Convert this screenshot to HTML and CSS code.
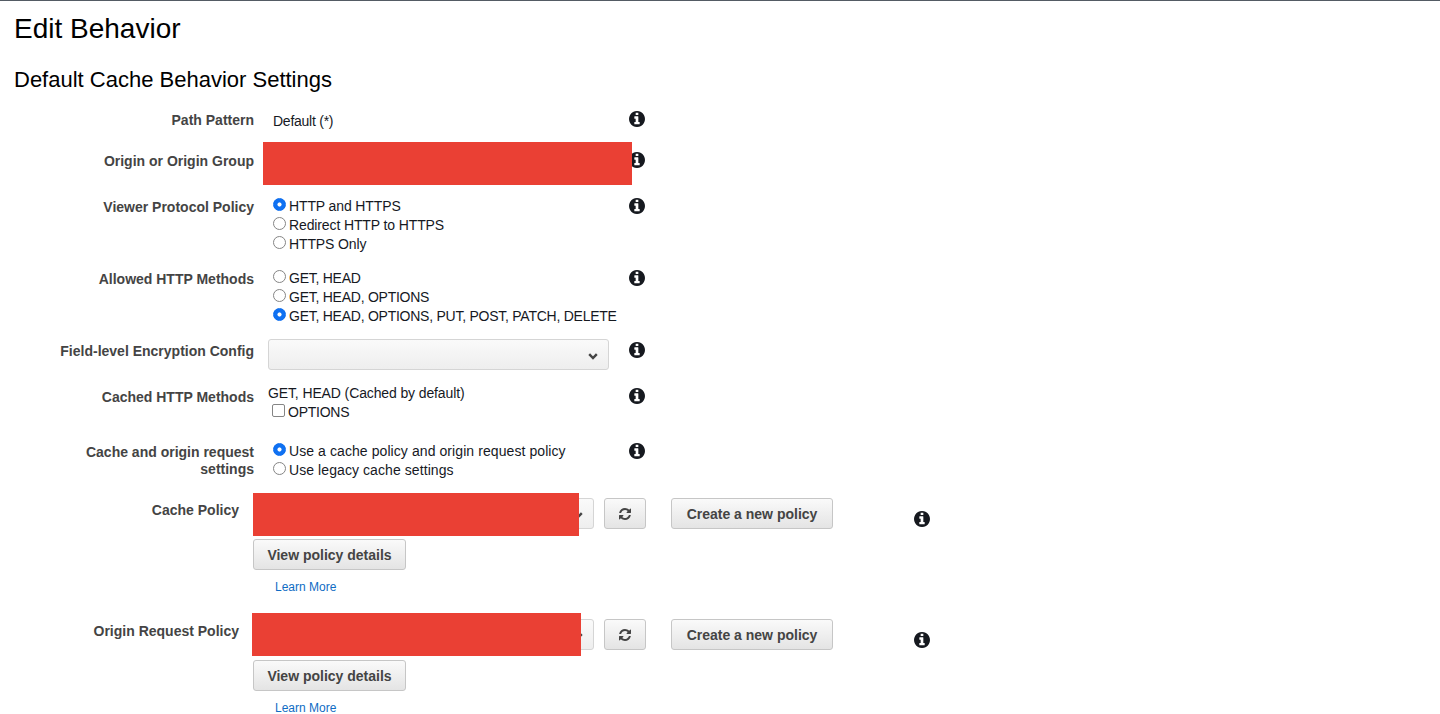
FILE: index.html
```html
<!DOCTYPE html>
<html lang="en">
<head>
  <meta charset="UTF-8">
  <meta name="viewport" content="width=device-width, initial-scale=1.0">
  <title>Edit Behavior</title>
  <link rel="stylesheet" href="styles.css">
</head>
<body>
  <svg class="sprite" aria-hidden="true">
    <symbol id="icon-info" viewBox="0 128 1536 1536">
      <path d="M1024 1376v-160q0-14-9-23t-23-9h-96v-512q0-14-9-23t-23-9h-320q-14 0-23 9t-9 23v160q0 14 9 23t23 9h96v320h-96q-14 0-23 9t-9 23v160q0 14 9 23t23 9h448q14 0 23-9t9-23zm-128-896v-160q0-14-9-23t-23-9h-192q-14 0-23 9t-9 23v160q0 14 9 23t23 9h192q14 0 23-9t9-23zm640 416q0 209-103 385.5t-279.5 279.5-385.5 103-385.5-103-279.5-279.5-103-385.5 103-385.5 279.5-279.5 385.5-103 385.5 103 279.5 279.5 103 385.5z"/>
    </symbol>
    <symbol id="icon-refresh" viewBox="0 0 1792 1792">
      <path d="M1639 1056q0 5-1 7-64 268-268 434.5t-478 166.5q-146 0-282.5-55t-243.5-157l-129 129q-19 19-45 19t-45-19-19-45v-448q0-26 19-45t45-19h448q26 0 45 19t19 45-19 45l-137 137q71 66 161 102t187 36q134 0 250-65t186-179q11-17 53-117 8-23 30-23h192q13 0 22.5 9.5t9.5 22.5zm25-800v448q0 26-19 45t-45 19h-448q-26 0-45-19t-19-45 19-45l138-138q-148-137-349-137-134 0-250 65t-186 179q-11 17-53 117-8 23-30 23h-199q-13 0-22.5-9.5t-9.5-22.5v-7q65-268 270-434.5t480-166.5q146 0 284 55.5t245 156.5l130-129q19-19 45-19t45 19 19 45z"/>
    </symbol>
    <symbol id="icon-chevron" viewBox="0 0 10 7">
      <path d="M1.2 1.2 5 5 8.8 1.2" fill="none" stroke="currentColor" stroke-width="2.4"/>
    </symbol>
  </svg>

  <div class="page">
    <h1>Edit Behavior</h1>
    <h2>Default Cache Behavior Settings</h2>

    <div class="row row-path">
      <div class="label">Path Pattern</div>
      <div class="control">
        <div class="line indent tight">Default (*)</div>
      </div>
      <svg class="info"><use href="#icon-info"/></svg>
    </div>

    <div class="row row-origin">
      <div class="label">Origin or Origin Group</div>
      <div class="control"></div>
      <svg class="info"><use href="#icon-info"/></svg>
      <div class="redact redact-origin"></div>
    </div>

    <div class="row row-viewer offset-2">
      <div class="label">Viewer Protocol Policy</div>
      <div class="control indent">
        <label class="line tight-sm"><input type="radio" name="viewer" checked>HTTP and HTTPS</label>
        <label class="line tight-sm"><input type="radio" name="viewer">Redirect HTTP to HTTPS</label>
        <label class="line tight-sm"><input type="radio" name="viewer">HTTPS Only</label>
      </div>
      <svg class="info"><use href="#icon-info"/></svg>
    </div>

    <div class="row row-allowed offset-2">
      <div class="label">Allowed HTTP Methods</div>
      <div class="control indent">
        <label class="line tight"><input type="radio" name="allowed">GET, HEAD</label>
        <label class="line tight"><input type="radio" name="allowed">GET, HEAD, OPTIONS</label>
        <label class="line tight"><input type="radio" name="allowed" checked>GET, HEAD, OPTIONS, PUT, POST, PATCH, DELETE</label>
      </div>
      <svg class="info"><use href="#icon-info"/></svg>
    </div>

    <div class="row row-field offset-3">
      <div class="label">Field-level Encryption Config</div>
      <div class="control">
        <div class="select">
          <svg class="chevron"><use href="#icon-chevron"/></svg>
        </div>
      </div>
      <svg class="info"><use href="#icon-info"/></svg>
    </div>

    <div class="row row-cached offset-5">
      <div class="label">Cached HTTP Methods</div>
      <div class="control">
        <div class="line tight-sm">GET, HEAD (Cached by default)</div>
        <label class="line check-line tight"><input type="checkbox">OPTIONS</label>
      </div>
      <svg class="info"><use href="#icon-info"/></svg>
    </div>

    <div class="row row-settings offset-2">
      <div class="label">Cache and origin request<br>settings</div>
      <div class="control indent">
        <label class="line loose"><input type="radio" name="settings" checked>Use a cache policy and origin request policy</label>
        <label class="line loose"><input type="radio" name="settings">Use legacy cache settings</label>
      </div>
      <svg class="info"><use href="#icon-info"/></svg>
    </div>

    <div class="row policy">
      <div class="label label-policy">Cache Policy</div>
      <div class="policy-body">
        <div class="policy-top">
          <div class="select">
            <svg class="chevron"><use href="#icon-chevron"/></svg>
          </div>
          <button class="btn btn-refresh"><svg class="refresh"><use href="#icon-refresh"/></svg></button>
          <button class="btn btn-create">Create a new policy</button>
          <svg class="info info-policy"><use href="#icon-info"/></svg>
        </div>
        <button class="btn btn-view">View policy details</button>
        <a class="learn" href="#">Learn More</a>
      </div>
      <div class="redact redact-cache"></div>
    </div>

    <div class="row policy">
      <div class="label label-policy">Origin Request Policy</div>
      <div class="policy-body">
        <div class="policy-top">
          <div class="select">
            <svg class="chevron"><use href="#icon-chevron"/></svg>
          </div>
          <button class="btn btn-refresh"><svg class="refresh"><use href="#icon-refresh"/></svg></button>
          <button class="btn btn-create">Create a new policy</button>
          <svg class="info info-policy"><use href="#icon-info"/></svg>
        </div>
        <button class="btn btn-view">View policy details</button>
        <a class="learn" href="#">Learn More</a>
      </div>
      <div class="redact redact-request"></div>
    </div>
  </div>
</body>
</html>
```

FILE: styles.css
```css
html, body {
  margin: 0;
  height: 714px;
  overflow: hidden;
  background: #fff;
}

body {
  font-family: "Liberation Sans", Arial, sans-serif;
  font-size: 14px;
  color: #16191f;
}

.sprite {
  display: none;
}

.page {
  border-top: 1px solid #545b64;
}

h1 {
  margin: 12px 0 0 14px;
  font-size: 28px;
  line-height: 32px;
  font-weight: normal;
  color: #000;
}

h2 {
  margin: 22px 0 18px 14px;
  font-size: 22px;
  line-height: 26px;
  font-weight: normal;
  color: #000;
}

.row {
  position: relative;
  display: flex;
  align-items: flex-start;
}

.row-path { height: 41px; }
.row-origin { height: 44px; }
.row-viewer { height: 72px; }
.row-allowed { height: 71px; }
.row-field { height: 44px; }
.row-cached { height: 58px; }
.row-settings { height: 57px; }

.offset-2 .label, .offset-2 .info { margin-top: 2px; }
.offset-3 .label, .offset-3 .info { margin-top: 3px; }
.offset-5 .label, .offset-5 .info { margin-top: 5px; }

.label {
  flex: none;
  width: 254px;
  padding-top: 1px;
  font-weight: bold;
  line-height: 17px;
  text-align: right;
  color: #444;
}

.control {
  flex: none;
  width: 361px;
  margin-left: 14px;
  box-sizing: border-box;
}

.indent {
  padding-left: 5px;
}

.line {
  display: block;
  height: 19px;
  line-height: 21px;
  white-space: nowrap;
}

.tight { letter-spacing: -0.25px; }
.tight-sm { letter-spacing: -0.12px; }
.loose { letter-spacing: 0.08px; }

.line input {
  appearance: none;
  width: 13px;
  height: 13px;
  margin: 0 3px 0 0;
  box-sizing: border-box;
  border: 1px solid #858585;
  border-radius: 50%;
  background: #fff;
  vertical-align: 0;
}

.line input:checked {
  border-color: #0a6cf0;
  background: radial-gradient(circle, #fff 0 1.7px, #0f71f2 2.4px);
}

.line input[type="checkbox"] {
  border-radius: 2px;
}

.check-line {
  padding-left: 4px;
}

.info {
  flex: none;
  width: 16px;
  height: 16px;
  fill: #16191f;
}

.select {
  position: relative;
  width: 341px;
  height: 31px;
  box-sizing: border-box;
  border: 1px solid #d5d5d5;
  border-radius: 3px;
  background: linear-gradient(#fafafa, #eeeeee);
}

.chevron {
  position: absolute;
  right: 10px;
  top: 13px;
  width: 10px;
  height: 7px;
  color: #444;
}

.label-policy {
  width: 239px;
  margin-top: 3px;
}

.policy {
  height: 121px;
}

.policy-body {
  margin-left: 14px;
}

.policy-top {
  display: flex;
  align-items: flex-start;
  margin-bottom: 10px;
}

.btn {
  display: block;
  height: 31px;
  box-sizing: border-box;
  padding: 0;
  border: 1px solid #c6c6c6;
  border-radius: 3px;
  background: linear-gradient(#fafafa, #e4e4e4);
  font-family: inherit;
  font-size: 14px;
  font-weight: bold;
  color: #444;
}

.btn-refresh {
  width: 42px;
  margin-left: 10px;
}

.refresh {
  display: block;
  width: 14px;
  height: 14px;
  margin: 0 auto;
  fill: #444;
}

.btn-create {
  width: 162px;
  margin-left: 25px;
}

.btn-view {
  width: 153px;
}

.info-policy {
  margin: 13px 0 0 81px;
}

.learn {
  display: block;
  margin: 9px 0 0 22px;
  font-size: 12px;
  line-height: 16px;
  color: #0f6cc4;
  text-decoration: none;
}

.redact {
  position: absolute;
  height: 43px;
  background: #ea4034;
}

.redact-origin {
  left: 263px;
  top: -10px;
  width: 369px;
}

.redact-cache {
  left: 253px;
  top: -5px;
  width: 326px;
}

.redact-request {
  left: 252px;
  top: -6px;
  width: 329px;
}
```
